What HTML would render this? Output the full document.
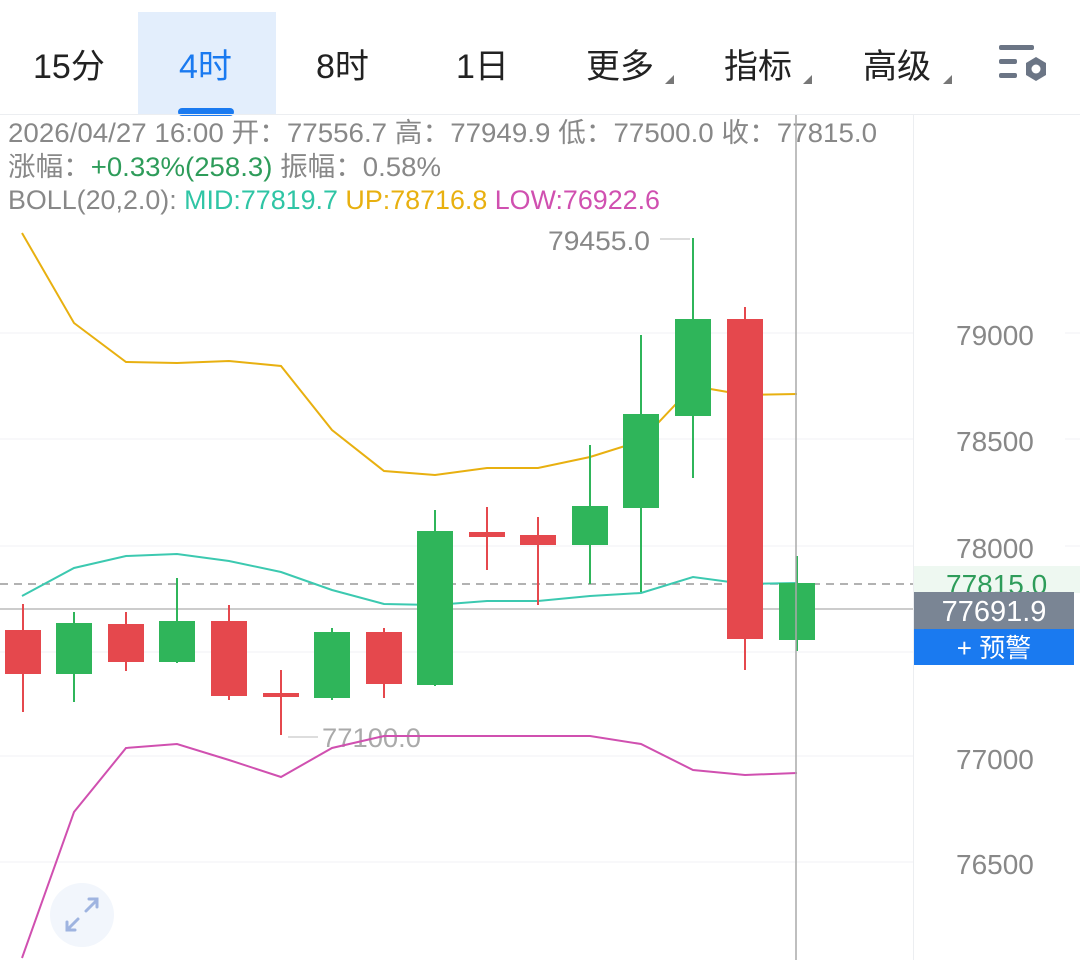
<!DOCTYPE html>
<html><head><meta charset="utf-8"><style>
body{margin:0;width:1080px;height:960px;background:#fff;overflow:hidden;font-family:"Liberation Sans","Noto Sans CJK SC",sans-serif;}
</style></head><body>
<svg width="1080" height="960" xmlns="http://www.w3.org/2000/svg" style="position:absolute;left:0;top:0;font-family:'Liberation Sans','Noto Sans CJK SC',sans-serif">
<rect x="138" y="12" width="138" height="102" fill="#e3eefc"/>
<rect x="178" y="108" width="56" height="8" rx="4" fill="#1a7af0"/>
<line x1="0" y1="114.5" x2="1080" y2="114.5" stroke="#eceef1"/>
<g font-size="34" fill="#222">
<text x="33" y="78">15分</text>
<text x="179" y="78" fill="#1a7af0">4时</text>
<text x="316" y="78">8时</text>
<text x="456" y="78">1日</text>
<text x="586" y="78">更多</text>
<text x="724" y="78">指标</text>
<text x="863" y="78">高级</text>
</g>
<g fill="#777"><polygon points="665,84 674,84 674,75"/><polygon points="803,84 812,84 812,75"/><polygon points="943,84 952,84 952,75"/></g>
<g fill="#6b7585"><rect x="999" y="45" width="35" height="5" rx="2"/><rect x="999" y="59" width="18" height="5" rx="2"/><rect x="999" y="73" width="18" height="5" rx="2"/></g>
<polygon points="1036,57 1046,63 1046,75 1036,81 1026,75 1026,63" fill="#6b7585"/><circle cx="1036" cy="69" r="4.5" fill="#fff"/>
<line x1="913.5" y1="115" x2="913.5" y2="960" stroke="#eceef1"/>
<g stroke="#f1f2f4"><line x1="0" y1="333" x2="913" y2="333"/><line x1="0" y1="439" x2="913" y2="439"/><line x1="0" y1="546" x2="913" y2="546"/><line x1="0" y1="652" x2="913" y2="652"/><line x1="0" y1="756" x2="913" y2="756"/><line x1="0" y1="862" x2="913" y2="862"/>
<line x1="1065" y1="333" x2="1080" y2="333"/><line x1="1065" y1="439" x2="1080" y2="439"/><line x1="1065" y1="546" x2="1080" y2="546"/></g>
<g font-size="27" fill="#888">
<text x="8" y="142" textLength="869" lengthAdjust="spacingAndGlyphs">2026/04/27 16:00 开：77556.7 高：77949.9 低：77500.0 收：77815.0</text>
<text x="8" y="176" textLength="433" lengthAdjust="spacingAndGlyphs">涨幅：<tspan fill="#2e9c5a">+0.33%(258.3)</tspan> 振幅：0.58%</text>
<text x="8" y="209" textLength="652" lengthAdjust="spacingAndGlyphs">BOLL(20,2.0): <tspan fill="#2fc5a5">MID:77819.7</tspan> <tspan fill="#e8b010">UP:78716.8</tspan> <tspan fill="#d050b0">LOW:76922.6</tspan></text>
<text x="548" y="250" textLength="102" lengthAdjust="spacingAndGlyphs">79455.0</text><text x="322" y="747" textLength="99" lengthAdjust="spacingAndGlyphs" fill="#aaa">77100.0</text>
</g>
<line x1="660" y1="239" x2="690" y2="239" stroke="#bbb"/><line x1="288" y1="737" x2="318" y2="737" stroke="#bbb"/>
<g font-size="28" fill="#888"><text x="956" y="345">79000</text><text x="956" y="451">78500</text><text x="956" y="558">78000</text><text x="956" y="769">77000</text><text x="956" y="874">76500</text></g>
<rect x="914" y="566" width="166" height="27" fill="#eef8f1"/>
<text x="946" y="594" font-size="28" fill="#2e9c5a">77815.0</text>
<line x1="0" y1="584" x2="913" y2="584" stroke="#999" stroke-width="1.5" stroke-dasharray="8,6"/>
<line x1="0" y1="609" x2="913" y2="609" stroke="#bbb" stroke-width="1.5"/>
<polyline fill="none" stroke="#e8b010" stroke-width="2" points="22,233 74,323 126,362 177,363 229,361 281,366 332,430 384,471 435,475 487,468 538,468 590,457 641,441 693,386 745,395 797,394"/>
<polyline fill="none" stroke="#3cc9b0" stroke-width="2" points="22,596 74,568 126,556 177,554 229,561 281,572 332,590 384,604 435,605 487,601 538,601 590,596 641,593 693,577 745,584 797,583"/>
<polyline fill="none" stroke="#d050b0" stroke-width="2" points="22,958 74,812 126,748 177,744 229,760 281,777 332,748 384,736 435,736 487,736 538,736 590,736 641,744 693,770 745,775 797,773"/>
<g stroke-width="2">
<g stroke="#e5484d" fill="#e5484d">
<line x1="23" y1="604" x2="23" y2="712"/><rect x="6" y="631" width="34" height="42"/>
<line x1="126" y1="612" x2="126" y2="671"/><rect x="109" y="625" width="34" height="36"/>
<line x1="229" y1="605" x2="229" y2="700"/><rect x="212" y="622" width="34" height="73"/>
<line x1="281" y1="670" x2="281" y2="735"/><rect x="264" y="694" width="34" height="2"/>
<line x1="384" y1="628" x2="384" y2="698"/><rect x="367" y="633" width="34" height="50"/>
<line x1="487" y1="507" x2="487" y2="570"/><rect x="470" y="533" width="34" height="3"/>
<line x1="538" y1="517" x2="538" y2="605"/><rect x="521" y="536" width="34" height="8"/>
<line x1="745" y1="307" x2="745" y2="670"/><rect x="728" y="320" width="34" height="318"/>
</g>
<g stroke="#2fb55a" fill="#2fb55a">
<line x1="74" y1="612" x2="74" y2="702"/><rect x="57" y="624" width="34" height="49"/>
<line x1="177" y1="578" x2="177" y2="663"/><rect x="160" y="622" width="34" height="39"/>
<line x1="332" y1="628" x2="332" y2="700"/><rect x="315" y="633" width="34" height="64"/>
<line x1="435" y1="510" x2="435" y2="686"/><rect x="418" y="532" width="34" height="152"/>
<line x1="590" y1="445" x2="590" y2="584"/><rect x="573" y="507" width="34" height="37"/>
<line x1="641" y1="335" x2="641" y2="592"/><rect x="624" y="415" width="34" height="92"/>
<line x1="693" y1="238" x2="693" y2="478"/><rect x="676" y="320" width="34" height="95"/>
<line x1="797" y1="556" x2="797" y2="651"/><rect x="780" y="584" width="34" height="55"/>
</g></g>
<line x1="796" y1="115" x2="796" y2="960" stroke="#aaa" stroke-width="1.5"/>
<rect x="914" y="592" width="160" height="37" fill="#7a8594"/>
<text x="994" y="621" font-size="29" fill="#fff" text-anchor="middle">77691.9</text>
<rect x="914" y="629" width="160" height="36" fill="#1a7af0"/>
<text x="994" y="657" font-size="26" fill="#fff" text-anchor="middle">+ 预警</text>
<circle cx="82" cy="915" r="32" fill="#f2f6fc"/>
<g stroke="#9fb4e0" stroke-width="3" fill="none" stroke-linecap="round"><path d="M86,911 L97,900 M89,899 L97,899 L97,907"/><path d="M78,919 L67,930 M67,922 L67,930 L75,930"/></g>
</svg>
</body></html>
